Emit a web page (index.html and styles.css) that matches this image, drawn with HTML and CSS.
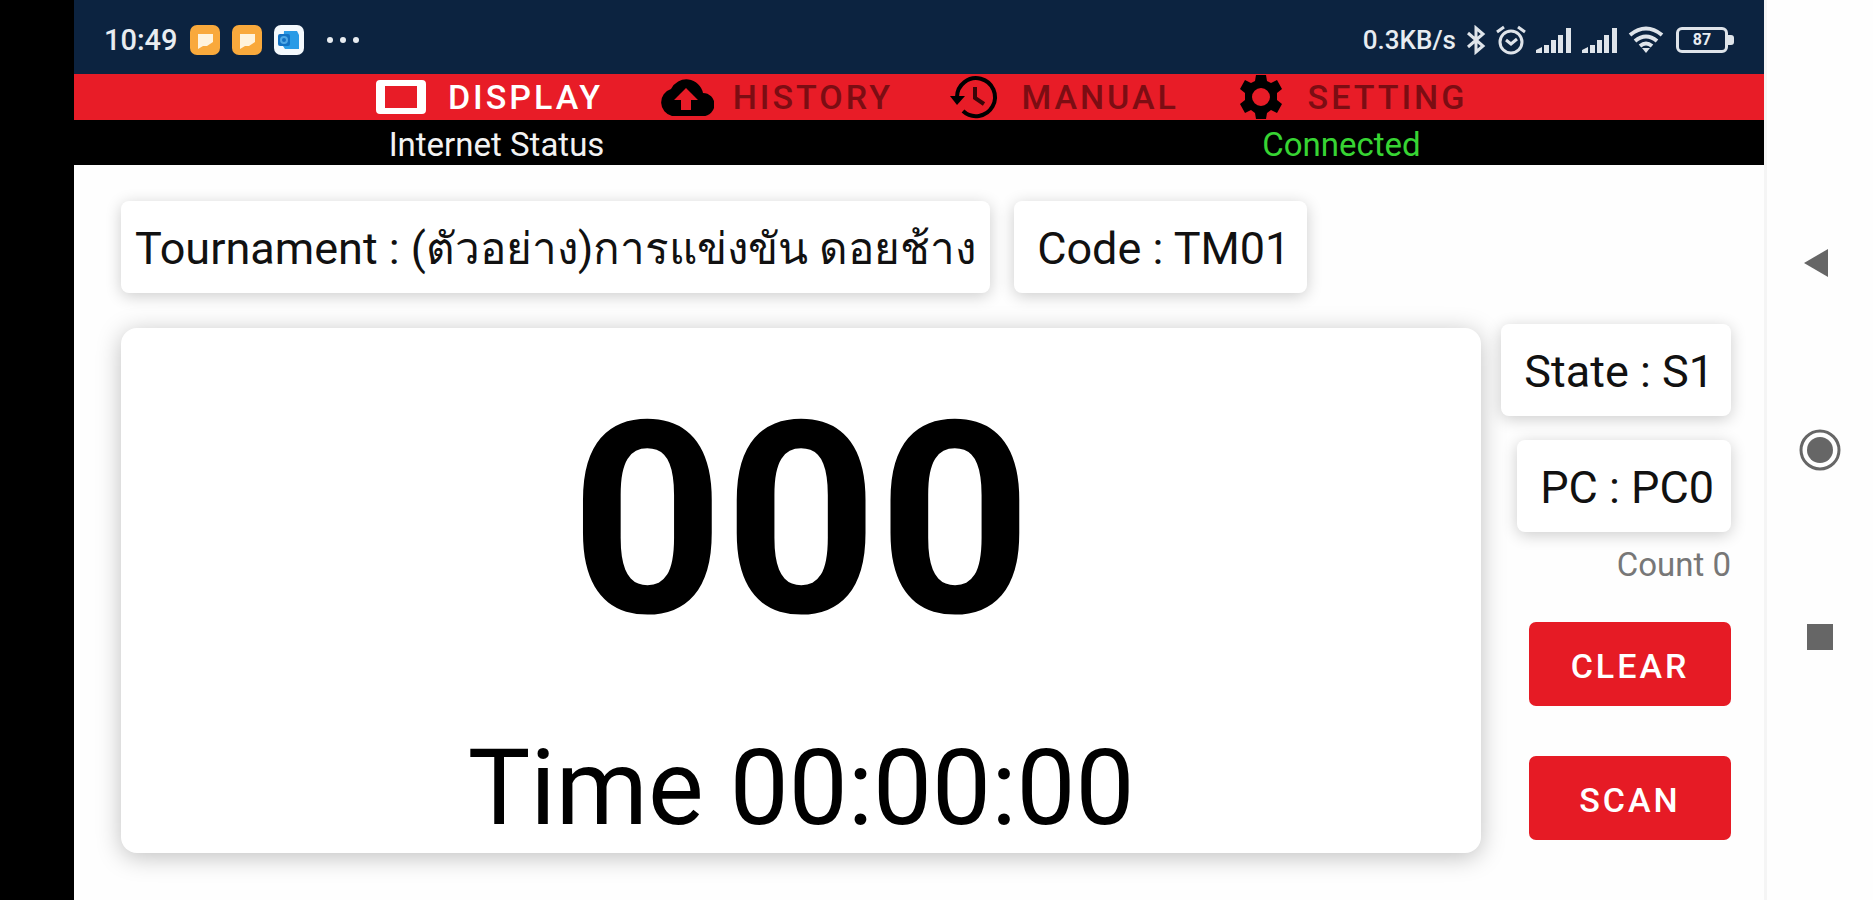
FILE: index.html
```html
<!DOCTYPE html>
<html lang="th">
<head>
  <meta charset="UTF-8">
  <meta name="viewport" content="width=device-width, initial-scale=1.0">
  <title>Display</title>
  <link rel="stylesheet" href="styles.css">
</head>
<body>

  <div class="app">
    <header class="status-bar">
      <div class="status-left">
        <span class="clock">10:49</span>
        <svg class="app-icon" viewBox="0 0 30 30">
          <rect width="30" height="30" rx="7" fill="#f9a93c"/>
          <path d="M8 9h15v8l-6 4H13l-5 3z" fill="#fff3dc"/>
        </svg>
        <svg class="app-icon" viewBox="0 0 30 30">
          <rect width="30" height="30" rx="7" fill="#f9a93c"/>
          <path d="M8 9h15v8l-6 4H13l-5 3z" fill="#fff3dc"/>
        </svg>
        <svg class="app-icon" viewBox="0 0 30 30">
          <rect width="30" height="30" rx="7" fill="#f4f9fd"/>
          <path d="M10 6h13l2 4v14H11l-2-3z" fill="#2a9be6"/>
          <rect x="4" y="9" width="12" height="12" rx="2" fill="#1272c4"/>
          <circle cx="10" cy="15" r="3" fill="none" stroke="#4fa8e6" stroke-width="2"/>
        </svg>
        <svg class="dots" viewBox="0 0 34 8">
          <circle cx="4" cy="4" r="3"/><circle cx="17" cy="4" r="3"/><circle cx="30" cy="4" r="3"/>
        </svg>
      </div>
      <div class="status-right">
        <span class="speed">0.3KB/s</span>
        <svg width="20" height="30" viewBox="0 0 20 30" fill="none" stroke="#dfe4ea" stroke-width="3">
          <path d="M2 8l15 13-7 6V3l7 6L2 22"/>
        </svg>
        <svg width="30" height="30" viewBox="0 0 30 30" fill="none" stroke="#dfe4ea" stroke-width="3">
          <circle cx="15" cy="17" r="11"/>
          <path d="M1 7l7-5M29 7l-7-5M10 15l5 4 6-5"/>
        </svg>
        <svg width="36" height="26" viewBox="0 0 36 26" fill="#dfe4ea">
          <path d="M0 26v-3l6-3v6zM8 18h5v8H8zM15 13h5v13h-5zM22 8h5v18h-5zM30 1h5v25h-5z"/>
        </svg>
        <svg width="36" height="26" viewBox="0 0 36 26" fill="#dfe4ea">
          <path d="M0 26v-3l6-3v6zM8 18h5v8H8zM15 13h5v13h-5zM22 8h5v18h-5zM30 1h5v25h-5z"/>
        </svg>
        <svg width="36" height="28" viewBox="0 0 36 28" fill="none" stroke="#dfe4ea" stroke-width="4">
          <path d="M2 9q16-13 32 0M7 15q11-9 22 0M12 20q6-5 12 0"/>
          <path d="M14 22h8l-4 5z" fill="#dfe4ea" stroke="none"/>
        </svg>
        <span class="battery">87</span>
      </div>
    </header>

    <nav class="tab-bar">
      <a class="tab active" href="#display">
        <svg viewBox="0 0 56 46"><path fill="currentColor" fill-rule="evenodd" d="M7 6h42a4 4 0 0 1 4 4v26a4 4 0 0 1-4 4H7a4 4 0 0 1-4-4V10a4 4 0 0 1 4-4zm5 6v22h32V12z"/></svg>
        <span>DISPLAY</span>
      </a>
      <a class="tab" href="#history">
        <svg viewBox="0 0 56 46"><path d="M45 19a17 17 0 0 0-32-4A14 14 0 0 0 14 42h31a11 11 0 0 0 0-23zM33 26v10H23V26h-7l12-12 12 12z"/></svg>
        <span>HISTORY</span>
      </a>
      <a class="tab" href="#manual">
        <svg viewBox="0 0 56 46">
          <path d="M11 23A19 19 0 1 1 17 37" fill="none" stroke="#000" stroke-width="4"/>
          <path d="M4 22h15l-8 9z"/>
          <path d="M29 13v11l9 6" fill="none" stroke="#3a0508" stroke-width="4"/>
        </svg>
        <span>MANUAL</span>
      </a>
      <a class="tab" href="#setting">
        <svg viewBox="0 0 56 46"><path fill-rule="evenodd" d="M23 1h10l1 6 4 2 6-3 5 9-5 4v7l5 4-5 9-6-3-4 3-1 6H23l-1-6-4-3-6 3-5-9 5-4v-7l-5-4 5-9 6 3 4-2zM28 14a9 9 0 1 0 0 18 9 9 0 0 0 0-18z"/></svg>
        <span>SETTING</span>
      </a>
    </nav>

    <div class="net-bar">
      <span>Internet Status</span>
      <span class="connected">Connected</span>
    </div>

    <main class="content">
      <div class="info-row">
        <div class="card tournament">Tournament : <span class="thai">(ตัวอย่าง)การแข่งขัน ดอยช้าง</span></div>
        <div class="card">Code : TM01</div>
      </div>
      <div class="board-row">
        <section class="board">
          <div class="number">000</div>
          <div class="time">Time 00:00:00</div>
        </section>
        <aside class="side">
          <div class="card">State : S1</div>
          <div class="card pc">PC : PC0</div>
          <div class="count">Count 0</div>
          <button class="btn" type="button">CLEAR</button>
          <button class="btn" type="button">SCAN</button>
        </aside>
      </div>
    </main>
  </div>

  <div class="system-nav">
    <button type="button" aria-label="Back"><svg viewBox="0 0 48 48"><path d="M8 24l24-14v28z"/></svg></button>
    <button type="button" aria-label="Home"><svg viewBox="0 0 48 48"><circle cx="24" cy="24" r="19" fill="none" stroke="#666" stroke-width="3"/><circle cx="24" cy="24" r="13"/></svg></button>
    <button type="button" aria-label="Recent"><svg viewBox="0 0 48 48"><path d="M11 11h26v26H11z"/></svg></button>
  </div>

</body>
</html>
```
FILE: styles.css
```css
* {
  box-sizing: border-box;
}
body {
  font-family: Roboto, "Noto Sans", sans-serif;
  background-color: #fefefe;
  color: #111;
  margin: 0;
  min-height: 100vh;
  display: flex;
  border-left: 74px solid #000;
}
.app {
  flex: 1;
  display: flex;
  flex-direction: column;
}

/* status bar */
.status-bar {
  height: 74px;
  padding: 6px 30px 0;
  display: flex;
  justify-content: space-between;
  align-items: center;
  background-color: #0c2340;
  color: #e8ecf1;
}
.status-left, .status-right {
  display: flex;
  align-items: center;
}
.status-left {
  gap: 12px;
}
.status-right {
  gap: 10px;
}
.clock {
  font-size: 29px;
  font-weight: 500;
}
.speed {
  font-size: 26px;
  font-weight: 500;
}
.app-icon {
  width: 30px;
  height: 30px;
}
.dots {
  width: 34px;
  height: 8px;
  margin-left: 10px;
  fill: #e8ecf1;
}
.battery {
  position: relative;
  width: 52px;
  height: 26px;
  margin: 0 6px 0 2px;
  border: 3px solid #dfe4ea;
  border-radius: 6px;
  font-size: 16px;
  font-weight: 700;
  line-height: 20px;
  text-align: center;
}
.battery::after {
  content: "";
  position: absolute;
  right: -9px;
  top: 5px;
  width: 6px;
  height: 10px;
  border-radius: 0 3px 3px 0;
  background-color: #dfe4ea;
}

/* tabs */
.tab-bar {
  display: flex;
  justify-content: center;
  padding: 0 16%;
  height: 46px;
  background-color: #e81c27;
}
.tab {
  flex: 1;
  display: flex;
  justify-content: center;
  align-items: center;
  gap: 19px;
  color: #7c0d13;
  font-size: 34px;
  font-weight: 500;
  line-height: 46px;
  letter-spacing: 3px;
  text-decoration: none;
}
.tab svg {
  width: 56px;
  height: 46px;
}
.tab.active {
  color: #fff;
}
.net-bar {
  display: grid;
  grid-template-columns: 1fr 1fr;
  height: 45px;
  line-height: 50px;
  background-color: #000;
  color: #f2f2f2;
  font-size: 33px;
  text-align: center;
}
.connected {
  color: #37d433;
}

/* content */
.content {
  flex: 1;
  display: flex;
  flex-direction: column;
  gap: 31px;
  padding: 36px 33px 47px 47px;
}
.card {
  padding: 21px 17px 17px 23px;
  border-radius: 8px;
  background-color: #fff;
  box-shadow: 0 3px 16px rgba(0, 0, 0, 0.2);
  font-size: 45px;
  line-height: 54px;
  white-space: nowrap;
}
.info-row {
  display: flex;
  gap: 24px;
  height: 92px;
}
.tournament {
  padding: 21px 14px 17px;
}
.thai {
  font-size: 44px;
}
.board-row {
  flex: 1;
  display: flex;
  gap: 20px;
}
.board {
  flex: 1;
  display: flex;
  flex-direction: column;
  justify-content: space-between;
  margin-top: 4px;
  padding: 42px 0 4px;
  border-radius: 16px;
  background-color: #fff;
  box-shadow: 0 4px 24px rgba(0, 0, 0, 0.25);
  text-align: center;
}
.number {
  color: #000;
  font-size: 268px;
  font-weight: 700;
  line-height: 300px;
}
.time {
  color: #000;
  font-size: 105px;
  line-height: 120px;
}
.side {
  display: flex;
  flex-direction: column;
  align-items: flex-end;
}
.pc {
  margin-top: 24px;
}
.count {
  margin: 13px 0 37px;
  color: #777;
  font-size: 33px;
  line-height: 40px;
}
.btn {
  width: 202px;
  height: 84px;
  padding: 4px 0 0;
  margin-bottom: 50px;
  border: none;
  border-radius: 7px;
  background-color: #e61b25;
  color: #fff;
  font-family: inherit;
  font-size: 34px;
  font-weight: 500;
  letter-spacing: 3px;
  cursor: pointer;
}
.btn:last-child {
  margin-bottom: 0;
}

/* android navigation */
.system-nav {
  display: flex;
  flex-direction: column;
  justify-content: center;
  align-items: center;
  gap: 139px;
  width: 109px;
  border-left: 3px solid #f5f5f5;
}
.system-nav button {
  width: 48px;
  height: 48px;
  padding: 0;
  border: none;
  background: none;
  cursor: pointer;
}
.system-nav svg {
  width: 48px;
  height: 48px;
  fill: #666;
}
```
